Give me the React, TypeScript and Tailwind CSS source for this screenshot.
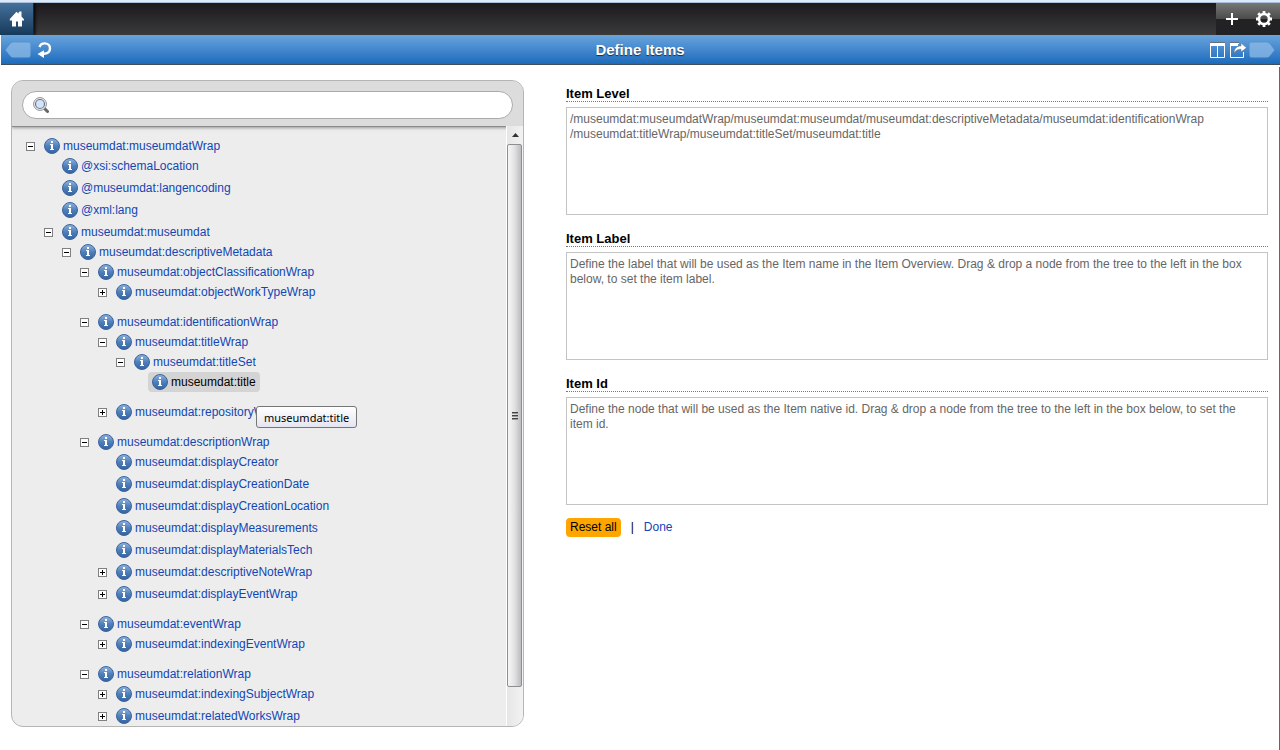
import { useState } from 'react';

type TreeNode = {
  name: string;
  collapsed?: boolean;
  children?: TreeNode[];
};

const tree: TreeNode[] = [
  {
    name: 'museumdat:museumdatWrap',
    children: [
      { name: '@xsi:schemaLocation' },
      { name: '@museumdat:langencoding' },
      { name: '@xml:lang' },
      {
        name: 'museumdat:museumdat',
        children: [
          {
            name: 'museumdat:descriptiveMetadata',
            children: [
              {
                name: 'museumdat:objectClassificationWrap',
                children: [{ name: 'museumdat:objectWorkTypeWrap', collapsed: true }],
              },
              {
                name: 'museumdat:identificationWrap',
                children: [
                  {
                    name: 'museumdat:titleWrap',
                    children: [
                      { name: 'museumdat:titleSet', children: [{ name: 'museumdat:title' }] },
                    ],
                  },
                  { name: 'museumdat:repositoryWrap', collapsed: true },
                ],
              },
              {
                name: 'museumdat:descriptionWrap',
                children: [
                  { name: 'museumdat:displayCreator' },
                  { name: 'museumdat:displayCreationDate' },
                  { name: 'museumdat:displayCreationLocation' },
                  { name: 'museumdat:displayMeasurements' },
                  { name: 'museumdat:displayMaterialsTech' },
                  { name: 'museumdat:descriptiveNoteWrap', collapsed: true },
                  { name: 'museumdat:displayEventWrap', collapsed: true },
                ],
              },
              {
                name: 'museumdat:eventWrap',
                children: [{ name: 'museumdat:indexingEventWrap', collapsed: true }],
              },
              {
                name: 'museumdat:relationWrap',
                children: [
                  { name: 'museumdat:indexingSubjectWrap', collapsed: true },
                  { name: 'museumdat:relatedWorksWrap', collapsed: true },
                ],
              },
            ],
          },
        ],
      },
    ],
  },
];

const fields = [
  {
    id: 'item-level',
    label: 'Item Level',
    value:
      '/museumdat:museumdatWrap/museumdat:museumdat/museumdat:descriptiveMetadata/museumdat:identificationWrap\n/museumdat:titleWrap/museumdat:titleSet/museumdat:title',
  },
  {
    id: 'item-label',
    label: 'Item Label',
    value:
      'Define the label that will be used as the Item name in the Item Overview. Drag & drop a node from the tree to the left in the box\nbelow, to set the item label.',
  },
  {
    id: 'item-id',
    label: 'Item Id',
    value:
      'Define the node that will be used as the Item native id. Drag & drop a node from the tree to the left in the box below, to set the\nitem id.',
  },
];

function InfoIcon() {
  return (
    <svg className="size-4 shrink-0" viewBox="0 0 16 16" aria-hidden="true">
      <defs>
        <linearGradient id="info-fill" x1="0" y1="0" x2="0" y2="1">
          <stop offset="0" stopColor="#8fb4de" />
          <stop offset="0.5" stopColor="#4f80bb" />
          <stop offset="1" stopColor="#34639f" />
        </linearGradient>
      </defs>
      <circle cx="8" cy="8" r="7.5" fill="url(#info-fill)" stroke="#3d649d" strokeWidth="1" />
      <path d="M7 3h2v2H7zM6 6h3v5h1v1H6v-1h1V7H6z" fill="#fff" />
    </svg>
  );
}

function ToggleIcon({ plus }: { plus: boolean }) {
  return (
    <svg className="size-[9px]" viewBox="0 0 9 9" shapeRendering="crispEdges" aria-hidden="true">
      <path d="M0 0h9v9H0z" fill="#808080" />
      <path d="M1 1h7v7H1z" fill="#fff" />
      <path d="M2 4h5v1H2z" fill="#000" />
      {plus && <path d="M4 2h1v5H4z" fill="#000" />}
    </svg>
  );
}

function NodeRow({
  node,
  selected,
  onSelect,
}: {
  node: TreeNode;
  selected: string;
  onSelect: (name: string) => void;
}) {
  const isSelected = node.name === selected;
  return (
    <li className={node.children ? '' : 'pb-0.5'}>
      <div className="flex h-5 items-center">
        <div className="flex w-[14px] shrink-0">
          {(node.children || node.collapsed) && (
            <button type="button" aria-label={`Toggle ${node.name}`}>
              <ToggleIcon plus={!!node.collapsed} />
            </button>
          )}
        </div>
        <div className="relative">
          <a
            href="#"
            onClick={() => onSelect(node.name)}
            className={`flex h-5 items-center gap-[3px] rounded px-1 whitespace-nowrap ${
              isSelected ? 'bg-[#d4d4d4] text-black' : 'text-[#1146b4]'
            }`}
          >
            <InfoIcon />
            {node.name}
          </a>
          {isSelected && (
            <div
              role="tooltip"
              className="absolute top-[34px] left-[108px] z-10 flex h-[22px] items-center rounded-[3px] border border-[#767676] bg-linear-to-b from-white to-[#e4e5f0] px-[7px] font-['Noto_Sans',sans-serif] text-[11px] whitespace-nowrap text-black"
            >
              {node.name}
            </div>
          )}
        </div>
      </div>
      {node.children && (
        <ul className="mb-2 pl-[18px]">
          {node.children.map((child) => (
            <NodeRow key={child.name} node={child} selected={selected} onSelect={onSelect} />
          ))}
        </ul>
      )}
    </li>
  );
}

function TopBar() {
  return (
    <header className="shrink-0">
      <div className="h-[3px] border-b border-[#a9bfd8] bg-[#dce9f8]" />
      <div className="flex h-8 justify-between overflow-hidden bg-linear-to-b from-[#1b191c] to-[#3b3b3c]">
        <button
          type="button"
          aria-label="Home"
          className="flex w-[34px] items-center justify-center border-r border-[#0f2a42] bg-linear-to-b from-[#45719c] to-[#163a5a] shadow-[1px_0_3px_#000]"
        >
          <svg className="size-4" viewBox="0 0 16 16" aria-hidden="true">
            <path
              d="M7.500 .8l2 2V1.500l1-1H12.500v5l2.500 2.700V9.500H13V15.500H9V10.500H7V15.500H3V9.500H.8V8z"
              fill="#fff"
            />
          </svg>
        </button>
        <div className="flex w-16 items-center justify-between bg-linear-to-b from-[#777] via-[#4b4b4b] via-50% to-[#353535] pr-2 pl-[9px] shadow-[inset_0_-16px_#222123]">
          <button type="button" aria-label="Add">
            <svg className="size-3.5" viewBox="0 0 14 14" fill="#fff" aria-hidden="true">
              <path d="M6 1h2v5h5v2H8v5H6V8H1V6h5z" />
            </svg>
          </button>
          <button type="button" aria-label="Settings">
            <svg className="size-4" viewBox="0 0 16 16" fill="none" stroke="#fff" aria-hidden="true">
              <circle cx="8" cy="8" r="5" strokeWidth="2.600" />
              <path
                d="M8 0v3M8 13v3M0 8h3M13 8h3M2.200 2.200l2 2M11.800 11.800l2 2M2.200 13.800l2-2M11.800 4.200l2-2"
                strokeWidth="2.800"
              />
            </svg>
          </button>
        </div>
      </div>
      <div className="ml-px flex h-[30px] items-center border-b border-[#3f4d5c] bg-linear-to-b from-[#68a4dc] to-[#1a6bbd] pr-[5px] pl-1">
        <div className="flex flex-1 items-center gap-1.5">
          <button type="button" aria-label="Back">
            <svg className="h-4 w-[26px]" viewBox="0 0 26 16" aria-hidden="true">
              <path
                d="M8 .5h15.500q2 0 2 2v11q0 2-2 2H8Q6 15.500 4 12.500L.5 8 4 3.500Q6 .5 8 .5z"
                fill="#8ebbe6"
                fillOpacity="0.750"
              />
            </svg>
          </button>
          <button type="button" aria-label="Reload">
            <svg className="size-4" viewBox="0 0 16 16" fill="none" aria-hidden="true">
              <path
                d="M2.500 5C3.500 2 6 1.300 8 1.400c3.500.2 5 2.800 5 5 0 3-2.500 5.200-6.500 5.400"
                stroke="#fff"
                strokeWidth="2.400"
              />
              <path d="M.5 12L7 8.200V16z" fill="#fff" />
            </svg>
          </button>
        </div>
        <h1 className="text-[15px] font-bold text-white [text-shadow:0_1px_1px_#1b2b3b]">Define Items</h1>
        <div className="flex flex-1 items-center justify-end gap-1">
          <button type="button" aria-label="Columns">
            <svg className="size-4" viewBox="0 0 16 16" fill="none" stroke="#fff" aria-hidden="true">
              <path d="M.5 1v14.500h14V1M7.500 3v12" />
              <path d="M0 2.500h15" strokeWidth="3" />
              <path d="M0 .5h15" stroke="#66707a" />
            </svg>
          </button>
          <button type="button" aria-label="Share">
            <svg className="h-4 w-[17px]" viewBox="0 0 17 16" fill="none" aria-hidden="true">
              <path d="M9 1.500H.5v14h13V10" stroke="#fff" />
              <path d="M0 2.500h8" stroke="#fff" strokeWidth="3" />
              <path d="M0 .5h9" stroke="#66707a" />
              <path
                d="M4 11c.5-5 3-7 7-7V1l5.500 4.800L11 10V7.200c-3 0-5 .8-7 3.800z"
                fill="#fff"
                stroke="#66707a"
                strokeWidth="0.500"
              />
            </svg>
          </button>
          <button type="button" aria-label="Forward" className="-ml-0.5">
            <svg className="h-4 w-[26px]" viewBox="0 0 26 16" aria-hidden="true">
              <path
                d="M18 .5H2.500q-2 0-2 2v11q0 2 2 2H18q2 0 4-3L25.500 8 22 3.500Q20 .5 18 .5z"
                fill="#8ebbe6"
                fillOpacity="0.750"
              />
            </svg>
          </button>
        </div>
      </div>
    </header>
  );
}

function Scrollbar() {
  return (
    <div className="z-20 -mt-px flex w-[17px] shrink-0 flex-col border-l border-white bg-linear-to-r from-[#e6e6e6] to-[#f2f2f2]">
      <div className="flex h-[18px] items-center justify-center">
        <svg className="h-1 w-[7px]" viewBox="0 0 7 4" aria-hidden="true">
          <path d="M3.500 0L7 4H0z" fill="#333" />
        </svg>
      </div>
      <div className="mr-px flex h-[543px] flex-col items-center justify-center gap-px rounded-[2px] border border-[#8e8e8e] bg-linear-to-r from-[#f6f6f6] via-[#e2e2e4] to-[#bcbcc0]">
        <div className="h-0.5 w-1.5 border-t border-[#444] bg-[#999]" />
        <div className="h-0.5 w-1.5 border-t border-[#444] bg-[#999]" />
        <div className="h-0.5 w-1.5 border-t border-[#444] bg-[#999]" />
      </div>
    </div>
  );
}

export default function App() {
  const [selected, setSelected] = useState('museumdat:title');

  return (
    <div className="flex h-screen flex-col overflow-hidden bg-white font-['Liberation_Sans',Arial,sans-serif] text-[12px] leading-[15px] text-black">
      <TopBar />
      <main className="mt-0.5 flex min-h-0 flex-1 gap-[42px] border-r border-[#666] pt-[13px] pr-[11px] pb-[23px] pl-[11px]">
        <section className="flex w-[513px] shrink-0 flex-col overflow-hidden rounded-[12px] border border-[#b5b5b5] bg-[#ededed]">
          <div className="z-10 border-b border-[#8a8a8a] bg-[#dcdcdc] px-2.5 pt-2.5 pb-[7px] shadow-[0_1px_3px_#999]">
            <div className="flex h-7 items-center gap-2 rounded-full border border-[#aaa] bg-white px-2.5">
              <svg className="size-4 shrink-0" viewBox="0 0 16 16" fill="none" aria-hidden="true">
                <path d="M11.500 11.500l3 3" stroke="#666" strokeWidth="3" strokeLinecap="round" />
                <circle cx="7" cy="7" r="6.400" fill="#f4f4f4" stroke="#8c8c8c" />
                <circle cx="7" cy="7" r="4.500" fill="#d6e2f5" stroke="#66779c" strokeWidth="1.200" />
              </svg>
              <input type="search" aria-label="Search tree" className="min-w-0 flex-1 bg-transparent outline-none" />
            </div>
          </div>
          <div className="flex min-h-0 flex-1">
            <ul className="min-w-0 flex-1 overflow-hidden pt-[9px] pl-3.5">
              {tree.map((node) => (
                <NodeRow key={node.name} node={node} selected={selected} onSelect={setSelected} />
              ))}
            </ul>
            <Scrollbar />
          </div>
        </section>

        <form className="min-w-0 flex-1 pt-1.5">
          {fields.map((field) => (
            <div key={field.id} className="mb-4">
              <label
                htmlFor={field.id}
                className="mb-[5px] block h-4 border-b border-dotted border-[#777] text-[13px] font-bold"
              >
                {field.label}
              </label>
              <textarea
                id={field.id}
                defaultValue={field.value}
                className="block h-[108px] w-full resize-none overflow-hidden border border-[#c4c4c4] bg-white px-[3px] py-1 text-[#666] outline-none"
              />
            </div>
          ))}
          <div className="-mt-[3px] flex items-center">
            <button type="reset" className="h-[19px] rounded bg-[#ffa500] px-1">
              Reset all
            </button>
            <span className="px-2.5">|</span>
            <a href="#" className="text-[#1146b4]">
              Done
            </a>
          </div>
        </form>
      </main>
    </div>
  );
}
